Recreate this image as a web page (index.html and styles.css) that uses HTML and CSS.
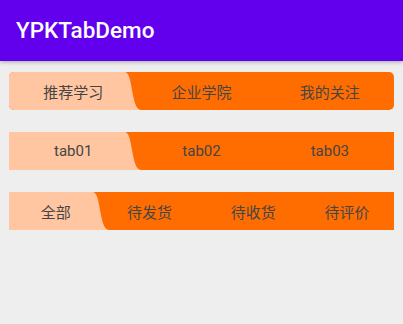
FILE: index.html
```html
<!DOCTYPE html>
<html>
<head>
<meta charset="utf-8">
<link rel="stylesheet" href="styles.css">
</head>
<body>
<header class="appbar"><span class="title">YPKTabDemo</span></header>
<main class="content">
  <div class="tabbar rounded">
    <svg class="indicator" viewBox="0 0 385 38" preserveAspectRatio="none"><path d="M0 0 H116 C124 0 122 38 132 38 H0 Z" fill="#FFC6A1"/></svg>
    <div class="tab">推荐学习</div>
    <div class="tab">企业学院</div>
    <div class="tab">我的关注</div>
  </div>
  <div class="tabbar">
    <svg class="indicator" viewBox="0 0 385 38" preserveAspectRatio="none"><path d="M0 0 H116 C124 0 122 38 132 38 H0 Z" fill="#FFC6A1"/></svg>
    <div class="tab">tab01</div>
    <div class="tab">tab02</div>
    <div class="tab">tab03</div>
  </div>
  <div class="tabbar">
    <svg class="indicator" viewBox="0 0 385 38" preserveAspectRatio="none"><path d="M0 0 H84 C92 0 90 38 100 38 H0 Z" fill="#FFC6A1"/></svg>
    <div class="tab">全部</div>
    <div class="tab t2">待发货</div>
    <div class="tab t3">待收货</div>
    <div class="tab">待评价</div>
  </div>
</main>
</body>
</html>
```
FILE: styles.css
```css
html, body {
  margin: 0;
  padding: 0;
  background: #EEEEEE;
  width: 403px;
  height: 324px;
  overflow: hidden;
}
.appbar {
  height: 61px;
  background: #6200EE;
  display: flex;
  align-items: center;
  padding-left: 16px;
  box-shadow: 0 1px 4px rgba(0,0,0,0.3);
  position: relative;
  z-index: 1;
}
.title {
  color: #FFFFFF;
  font-family: Roboto, "Noto Sans", sans-serif;
  font-weight: 500;
  font-size: 22.5px;
  line-height: 1;
  margin-top: -1px;
}
.content {
  display: flex;
  flex-direction: column;
  gap: 22px;
  padding: 11px 9px 0;
}
.tabbar {
  position: relative;
  display: flex;
  height: 38px;
  background: #FF6D00;
  overflow: hidden;
}
.tabbar.rounded {
  border-radius: 5px;
}
.indicator {
  position: absolute;
  left: 0;
  top: 0;
  width: 100%;
  height: 100%;
}
.tab {
  position: relative;
  flex: 1;
  display: flex;
  align-items: center;
  justify-content: center;
  font-family: Roboto, "Noto Sans CJK SC", sans-serif;
  font-size: 15px;
  color: #454545;
}
.tab.t2 {
  padding-right: 6px;
}
.tab.t3 {
  padding-left: 4px;
}
```
